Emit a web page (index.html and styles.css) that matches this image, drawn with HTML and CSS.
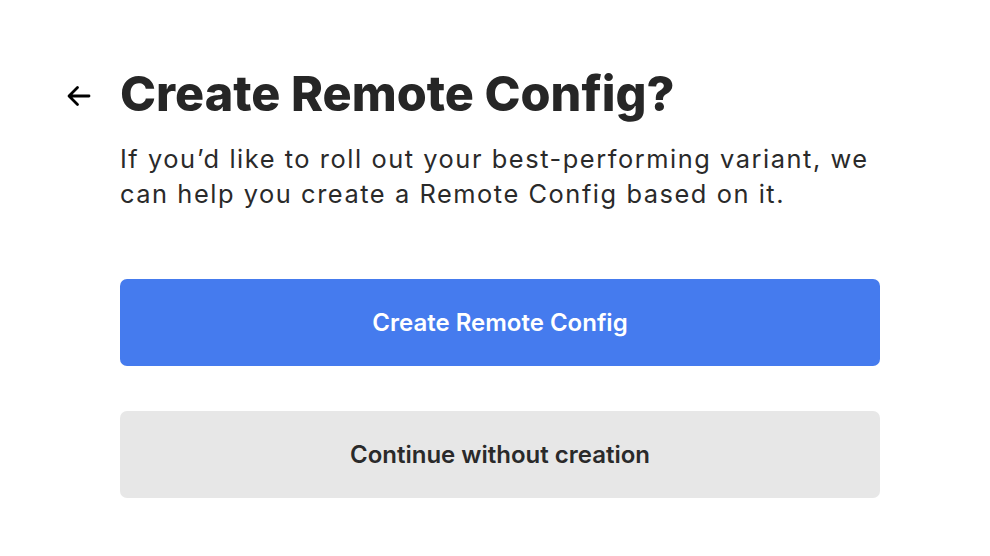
FILE: index.html
```html
<!DOCTYPE html>
<html>
<head>
<meta charset="utf-8">
<link rel="stylesheet" href="styles.css">
</head>
<body>
<div class="page">
  <div class="back">
    <svg width="26" height="22" viewBox="0 0 26 22" fill="none" stroke="#000" stroke-width="2.8" stroke-linecap="round" stroke-linejoin="round">
      <path d="M23 11H3.5M11.5 2.5L3 11l8.5 8.5"/>
    </svg>
  </div>
  <div class="content">
    <h1 class="title">Create Remote Config?</h1>
    <p class="desc">If you’d like to roll out your best-performing variant, we can help you create a Remote Config based on it.</p>
    <div class="actions">
      <button class="btn btn-primary">Create Remote Config</button>
      <button class="btn btn-secondary">Continue without creation</button>
    </div>
  </div>
</div>
</body>
</html>
```
FILE: styles.css
```css
* { box-sizing: border-box; }
html, body { margin: 0; padding: 0; background: #fff; }
body { font-family: Inter, "Noto Sans", sans-serif; color: #262626; }
.page {
  display: flex;
  padding: 66px 0 0 66px;
}
.back {
  width: 54px;
  padding-top: 19px;
}
.back svg { display: block; }
.content {
  width: 760px;
  display: flex;
  flex-direction: column;
}
.title {
  margin: 0;
  font-size: 48.5px;
  line-height: 56px;
  font-weight: 800;
  letter-spacing: 0;
  color: #262626;
}
.desc {
  margin: 19px 0 0;
  font-size: 25.4px;
  line-height: 35px;
  font-weight: 400;
  letter-spacing: 1.55px;
  color: #2a2a2a;
  max-width: 760px;
}
.actions {
  display: flex;
  flex-direction: column;
  gap: 45px;
  margin-top: 68px;
}
.btn {
  height: 87px;
  width: 760px;
  border: none;
  border-radius: 7px;
  font-family: Inter, "Noto Sans", sans-serif;
  font-size: 24px;
  font-weight: 600;
}
.btn-primary { background: #457bee; color: #fff; }
.btn-secondary { background: #e7e7e7; color: #2a2a2a; }
```
